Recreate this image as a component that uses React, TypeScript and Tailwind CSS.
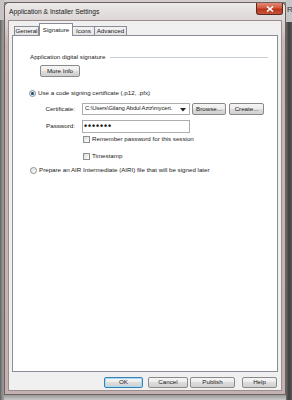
import React from "react";

const font = { fontFamily: '"Liberation Sans", Arial, sans-serif' };

function Btn({ w, label, def = false }: { w: string; label: string; def?: boolean }) {
  return (
    <div
      className={`${w} h-full flex items-center justify-center rounded-[2px] border ${
        def ? "border-[#3c7fb1] shadow-[inset_0_0_0_1px_#a6dbf5]" : "border-[#8a8a8a]"
      } bg-[linear-gradient(#f5f5f5_0%,#ececec_45%,#dddddd_50%,#d0d0d0_100%)] text-[6.2px] text-[#1a1a1a] leading-none`}
    >
      {label}
    </div>
  );
}

function Radio({ checked }: { checked: boolean }) {
  return (
    <div className="w-[7px] h-[7px] rounded-full border border-[#8e8f8f] bg-[linear-gradient(135deg,#e0e0e0,#ffffff)] flex items-center justify-center shrink-0">
      {checked && <div className="w-[3px] h-[3px] rounded-full bg-[#1e4f7e] shadow-[0_0_1px_#5a9ad0]" />}
    </div>
  );
}

function Check() {
  return (
    <div className="w-[7px] h-[7px] border border-[#8e8f8f] bg-[linear-gradient(135deg,#dcdcdc,#ffffff)] shrink-0" />
  );
}

export default function App() {
  return (
    <div className="w-[292px] h-[400px] flex bg-[#7e7e7e] overflow-hidden" style={font}>
      {/* left background strip */}
      <div className="w-[4px] h-full flex flex-col">
        <div className="h-[20px] bg-[#c9c4c4]" />
        <div className="flex-1 bg-[linear-gradient(90deg,#5e5e5e,#8c8c8c,#9a9a9a)]" />
      </div>
      {/* window column */}
      <div className="w-[282px] h-full flex flex-col">
        <div className="h-[2px] bg-[#d2cdcd]" />
        <div className="h-[393px] flex flex-col rounded-t-[5px] border border-[#6f5f5f] bg-[linear-gradient(#ece9e9_0px,#dcd5d5_18px,#c7b6b6_40px,#c2b2b2_100%)]">
          {/* title bar */}
          <div className="h-[17px] flex items-start justify-between pl-[4px] pr-[2px]">
            <div className="text-[6.7px] text-[#1a1a1a] mt-[6px] leading-none">Application &amp; Installer Settings</div>
            <div className="w-[27px] h-[12px] rounded-b-[3px] border border-t-0 border-[#5a2a22] bg-[linear-gradient(#e08a78_0%,#d2593e_45%,#b8331b_55%,#c8553a_100%)] flex items-center justify-center">
              <svg width="8" height="6" viewBox="0 0 8 6">
                <path d="M1 0.5 L7 5.5 M7 0.5 L1 5.5" stroke="#ffffff" strokeWidth="1.6" />
              </svg>
            </div>
          </div>
          {/* client */}
          <div className="flex-1 mx-[3px] mb-[3px] border border-[#9c8c8c] bg-[#f0f0f0] flex flex-col px-[3px] pt-[2px] pb-[2px]">
            {/* tabs */}
            <div className="h-[12px] flex items-end pl-[2px] relative z-10">
              <div className="w-[25px] h-[9px] border border-b-0 border-[#898c95] bg-[linear-gradient(#f3f3f3,#e3e3e3)] flex items-center justify-center text-[6.2px] leading-none text-[#1a1a1a]">
                General
              </div>
              <div className="w-[34px] h-[13px] mb-[-1px] border border-b-0 border-[#898c95] bg-white flex items-start justify-center pt-[3px] text-[6.2px] leading-none text-[#1a1a1a]">
                Signature
              </div>
              <div className="w-[22px] h-[9px] border border-b-0 border-l-0 border-[#898c95] bg-[linear-gradient(#f3f3f3,#e3e3e3)] flex items-center justify-center text-[6.2px] leading-none text-[#1a1a1a]">
                Icons
              </div>
              <div className="w-[32px] h-[9px] border border-b-0 border-l-0 border-[#898c95] bg-[linear-gradient(#f3f3f3,#e3e3e3)] flex items-center justify-center text-[6.2px] leading-none text-[#1a1a1a]">
                Advanced
              </div>
            </div>
            {/* panel */}
            <div className="h-[337px] border border-[#898c95] bg-white flex flex-col pl-[17px] pr-[9px] pt-[17px] text-[6.2px] text-[#1a1a1a] leading-none">
              <div className="h-[8px] flex items-center">
                <span>Application digital signature</span>
                <div className="flex-1 ml-[5px] h-px bg-[#c8cfd6]" />
              </div>
              <div className="mt-[4px] ml-[10px] h-[12px] flex">
                <Btn w="w-[40px]" label="More Info" />
              </div>
              <div className="mt-[12px] h-[8px] flex items-center -ml-[1px] gap-[2px]">
                <Radio checked />
                <span>Use a code signing certificate (.p12, .pfx)</span>
              </div>
              <div className="mt-[6px] h-[12px] flex items-center">
                <div className="w-[46px] text-right pr-[1px]">Certificate:</div>
                <div className="ml-[6px] w-[108px] h-full border border-[#abadb3] bg-white flex items-center pl-[2px] pr-[2px]">
                  <span className="flex-1 whitespace-nowrap text-[5.9px] tracking-[-0.12px]">C:\Users\Gilang Abdul Aziz\mycert.</span>
                  <svg width="8" height="5" viewBox="0 0 8 5" className="ml-[1px] shrink-0">
                    <path d="M1 1 L7 1 L4 4.5 Z" fill="#222" />
                  </svg>
                </div>
                <div className="ml-[2px] h-full flex">
                  <Btn w="w-[34px]" label="Browse..." />
                </div>
                <div className="ml-[3px] h-full flex">
                  <Btn w="w-[35px]" label="Create..." />
                </div>
              </div>
              <div className="mt-[5px] h-[13px] flex items-center">
                <div className="w-[46px] text-right pr-[1px]">Password:</div>
                <div className="ml-[6px] w-[108px] h-full border border-[#abadb3] bg-white flex items-center pl-[1px]">
                  <span className="text-[9px] tracking-[0.85px] font-bold leading-none">•••••••</span>
                </div>
              </div>
              <div className="mt-[2px] h-[8px] flex items-center pl-[53px] gap-[2px]">
                <Check />
                <span>Remember password for this session</span>
              </div>
              <div className="mt-[9px] h-[8px] flex items-center pl-[53px] gap-[2px]">
                <Check />
                <span>Timestamp</span>
              </div>
              <div className="mt-[6px] h-[8px] flex items-center gap-[2px]">
                <Radio checked={false} />
                <span>Prepare an AIR Intermediate (AIRI) file that will be signed later</span>
              </div>
            </div>
            {/* footer */}
            <div className="mt-[5px] h-[11px] flex justify-end pr-[1px]">
              <Btn w="w-[39px]" label="OK" def />
              <div className="w-[5px]" />
              <Btn w="w-[40px]" label="Cancel" />
              <div className="w-[2px]" />
              <Btn w="w-[45px]" label="Publish" />
              <div className="w-[7px]" />
              <Btn w="w-[35px]" label="Help" />
            </div>
          </div>
        </div>
        <div className="flex-1 bg-[linear-gradient(#9a9a9a,#c8c8c8)]" />
      </div>
      {/* right background strip */}
      <div className="w-[6px] h-full flex flex-col">
        <div className="h-[22px] bg-[#c6c6c6] text-[8px] text-[#333] leading-none pt-[6px] pl-[1px] overflow-hidden">R</div>
        <div className="flex-1 bg-[linear-gradient(90deg,#6a6a6a,#3e3e3e,#5a5a5a)]" />
      </div>
    </div>
  );
}
